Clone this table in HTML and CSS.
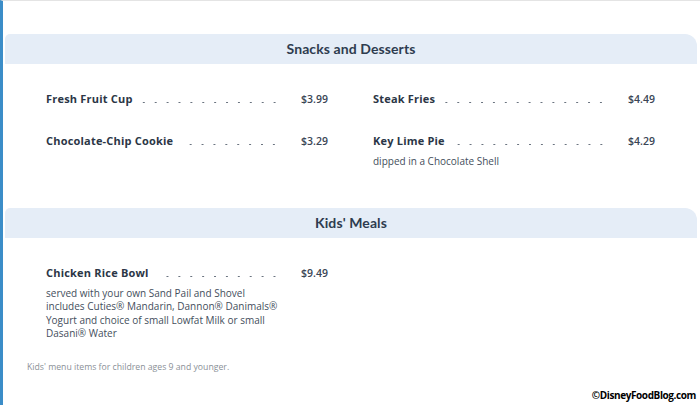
FILE: index.html
```html
<!DOCTYPE html>
<html lang="en">
<head>
<meta charset="utf-8">
<title>Menu</title>
<link rel="stylesheet" href="styles.css">
</head>
<body>
<div class="page">
  <section class="menu-section first">
    <h2 class="section-title">Snacks and Desserts</h2>
    <div class="items">
      <div class="item">
        <div class="item-line"><span class="name">Fresh Fruit Cup</span><span class="dots"></span><span class="price">$3.99</span></div>
      </div>
      <div class="item">
        <div class="item-line"><span class="name">Steak Fries</span><span class="dots"></span><span class="price">$4.49</span></div>
      </div>
      <div class="item">
        <div class="item-line"><span class="name">Chocolate-Chip Cookie</span><span class="dots"></span><span class="price">$3.29</span></div>
      </div>
      <div class="item">
        <div class="item-line"><span class="name">Key Lime Pie</span><span class="dots"></span><span class="price">$4.29</span></div>
        <p class="desc">dipped in a Chocolate Shell</p>
      </div>
    </div>
  </section>
  <section class="menu-section second">
    <h2 class="section-title">Kids' Meals</h2>
    <div class="items">
      <div class="item">
        <div class="item-line"><span class="name">Chicken Rice Bowl</span><span class="dots"></span><span class="price">$9.49</span></div>
        <p class="desc long">served with your own Sand Pail and Shovel<br>includes Cuties® Mandarin, Dannon® Danimals®<br>Yogurt and choice of small Lowfat Milk or small<br>Dasani® Water</p>
      </div>
    </div>
    <p class="note">Kids' menu items for children ages 9 and younger.</p>
  </section>
  <div class="watermark">©DisneyFoodBlog.com</div>
</div>
</body>
</html>
```
FILE: styles.css
```css
html, body {
  margin: 0;
  padding: 0;
  background: #ffffff;
}
.page {
  position: relative;
  width: 697px;
  height: 404px;
  border-left: 3px solid #3b8dc8;
  border-top: 1px solid #e4e4e4;
  font-family: "Open Sans", "Noto Sans", sans-serif;
  color: #2b3646;
  overflow: hidden;
}
.menu-section.first {
  padding-top: 33px;
}
.menu-section.second {
  padding-top: 40px;
}
.section-title {
  margin: 0 3px 0 2px;
  height: 30px;
  line-height: 30px;
  background: #e5edf7;
  border-radius: 5px 12px 0 0;
  text-align: center;
  font-family: Lato, "Open Sans", sans-serif;
  font-size: 14px;
  font-weight: 700;
  color: #2e3c4f;
  letter-spacing: 0.1px;
}
.items {
  display: grid;
  grid-template-columns: 282px 282px;
  column-gap: 45px;
  row-gap: 26px;
  padding: 27px 0 0 43px;
}
.item-line {
  display: flex;
  align-items: center;
  height: 16px;
  line-height: 16px;
}
.name {
  font-size: 11px;
  font-weight: 700;
  letter-spacing: 0.2px;
  color: #2b3646;
  white-space: nowrap;
}
.dots {
  flex: 1;
  align-self: stretch;
  margin: 0 21px 0 8px;
  background-image: radial-gradient(circle, #6b7480 0.8px, transparent 1.1px);
  background-size: 11.9px 3px;
  background-repeat: repeat-x;
  background-position: right 0 bottom 3px;
}
.price {
  font-size: 10.5px;
  font-weight: 600;
  color: #3a4555;
  white-space: nowrap;
}
.desc {
  margin: 5px 0 0;
  font-size: 10px;
  line-height: 14px;
  color: #444e5c;
}
.desc.long {
  margin-top: 6px;
  line-height: 13.4px;
}
.note {
  margin: 21px 0 0 24px;
  font-size: 8.7px;
  line-height: 10px;
  color: #8a9097;
}
.watermark {
  position: absolute;
  right: 4px;
  bottom: 3px;
  font-family: "Open Sans", "Liberation Sans", sans-serif;
  font-weight: 700;
  font-size: 10px;
  letter-spacing: -0.4px;
  color: #000;
}
```
